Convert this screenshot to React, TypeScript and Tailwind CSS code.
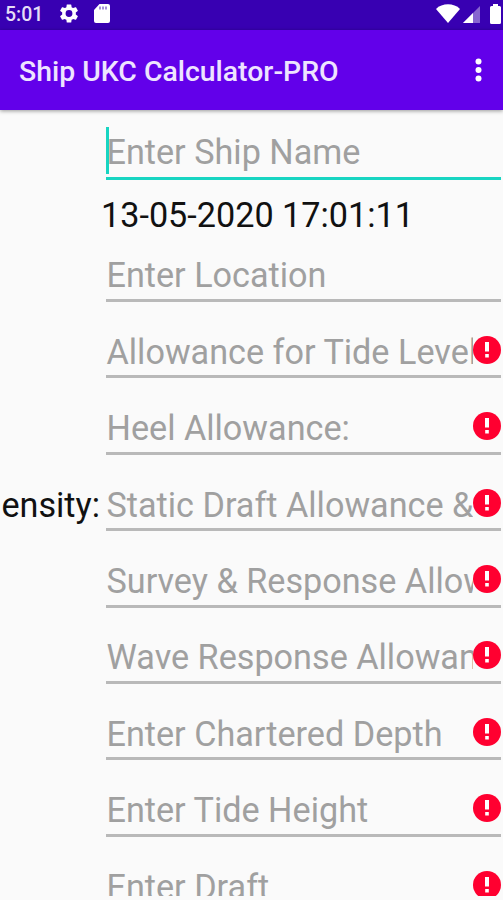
type FieldProps = {
  hint: string;
  error?: boolean;
  label?: string;
};

function ErrorIcon() {
  return (
    <svg viewBox="0 0 28 28" className="mt-[8px] h-7 w-7 shrink-0" aria-hidden="true">
      <circle cx="14" cy="14" r="14" fill="#ff0030" />
      <path d="M12 6h4v9.500h-4zM12.200 18h3.600v3.600h-3.600z" fill="#fff" />
    </svg>
  );
}

function Field({ hint, error, label }: FieldProps) {
  return (
    <div className="flex h-[76.4px] shrink-0 items-end">
      <div className="flex h-[50.5px] w-[106px] shrink-0 justify-end overflow-hidden pr-[6px] leading-[48px] whitespace-nowrap text-[#111]">
        {label}
      </div>
      <div className="flex h-[50.5px] w-[395px] border-b-[3px] border-[#b9b9b9]">
        <div className="min-w-0 flex-1 overflow-hidden pl-[0.5px] leading-[48px] whitespace-nowrap text-[#a0a0a0]">{hint}</div>
        {error && <ErrorIcon />}
      </div>
    </div>
  );
}

const fields: FieldProps[] = [
  { hint: "Allowance for Tide Level", error: true },
  { hint: "Heel Allowance:", error: true },
  { hint: "Static Draft Allowance & Density", error: true, label: "Density:" },
  { hint: "Survey & Response Allowance", error: true },
  { hint: "Wave Response Allowance", error: true },
  { hint: "Enter Chartered Depth", error: true },
  { hint: "Enter Tide Height", error: true },
  { hint: "Enter Draft", error: true },
];

export default function App() {
  return (
    <div className="flex h-[900px] w-[503px] flex-col overflow-hidden bg-[#fafafa] pb-[4px] font-['Roboto',sans-serif] text-[34.2px]">
      <div className="flex h-[30px] shrink-0 items-center bg-[#3800b2] text-[#e4dcf6]">
        <span className="ml-[5px] w-[54px] text-[19.5px] leading-[28px] font-medium">5:01</span>
        <svg viewBox="2 2 20 20" className="-mt-[3px] h-[19px] w-[20px]" fill="#fff">
          <path d="M19.14 12.94c.04-.3.06-.61.06-.94 0-.32-.02-.64-.07-.94l2.03-1.58a.49.49 0 0 0 .12-.61l-1.92-3.32a.488.488 0 0 0-.59-.22l-2.39.96c-.5-.38-1.03-.7-1.62-.94l-.36-2.54a.484.484 0 0 0-.48-.41h-3.84c-.24 0-.43.17-.47.41l-.36 2.54c-.59.24-1.13.57-1.62.94l-2.39-.96c-.22-.08-.47 0-.59.22L2.74 8.87c-.12.21-.08.47.12.61l2.03 1.58c-.05.3-.09.63-.09.94s.02.64.07.94l-2.03 1.58a.49.49 0 0 0-.12.61l1.92 3.32c.12.22.37.29.59.22l2.39-.96c.5.38 1.03.7 1.62.94l.36 2.54c.05.24.24.41.48.41h3.84c.24 0 .44-.17.47-.41l.36-2.54c.59-.24 1.13-.56 1.62-.94l2.39.96c.22.08.47 0 .59-.22l1.92-3.32c.12-.22.07-.47-.12-.61l-2.01-1.58zM12 15.6A3.6 3.6 0 1 1 12 8.4a3.6 3.6 0 0 1 0 7.2z" />
        </svg>
        <svg viewBox="0 0 16 19" className="-mt-[3px] ml-[15px] h-[19px] w-4">
          <path d="M5.5 0H14a2 2 0 0 1 2 2v15a2 2 0 0 1-2 2H2a2 2 0 0 1-2-2V6z" fill="#fff" />
          <path d="M6 2.500v3M9 2.500v3M12 2.500v3" stroke="#8f70d2" strokeWidth="1.6" />
        </svg>
        <svg viewBox="0 0 24 19" className="-mt-[3px] ml-auto h-[19px] w-6">
          <path d="M0 5C6-1.2 18-1.2 24 5L12 19z" fill="#fff" />
        </svg>
        <svg viewBox="0 0 17 17" className="-mt-[1px] ml-[3px] h-[17px] w-[17px]">
          <path d="M17 0v17H0z" fill="#8765d0" />
          <path d="M10 7v10H0z" fill="#fff" />
        </svg>
        <svg viewBox="0 0 11 20" className="mr-[2px] -mt-[3px] ml-[10px] h-5 w-[11px]">
          <path d="M3 0h5v2h1.500A1.500 1.500 0 0 1 11 3.500v15a1.500 1.500 0 0 1-1.500 1.500h-8A1.500 1.500 0 0 1 0 18.500v-15A1.500 1.500 0 0 1 1.500 2H3z" fill="#fff" />
        </svg>
      </div>
      <header className="z-10 flex h-[80px] shrink-0 items-center justify-between bg-[#6200ea] pr-[21px] pl-[19px] shadow-[0_1px_4px_rgba(0,0,0,0.4)]">
        <h1 className="mt-[4px] text-[28.4px] leading-[40px] font-medium whitespace-nowrap text-[#eee4ff]">Ship UKC Calculator-PRO</h1>
        <svg viewBox="0 0 7 24" className="h-6 w-[7px]" fill="#fff">
          <circle cx="3.5" cy="3.5" r="3" />
          <circle cx="3.5" cy="12" r="3" />
          <circle cx="3.5" cy="20.5" r="3" />
        </svg>
      </header>
      <main className="flex min-h-0 flex-1 flex-col overflow-hidden pt-[17px]">
        <div className="ml-[106px] flex h-[53px] w-[395px] shrink-0 border-b-[3px] border-[#18d5c2]">
          <div className="h-[47px] w-[3px] shrink-0 bg-[#18d5c2]" />
          <div className="-ml-[2.5px] leading-[51px] whitespace-nowrap text-[#a0a0a0]">Enter Ship Name</div>
        </div>
        <div className="ml-[101px] h-[45.6px] shrink-0 leading-[70px] whitespace-nowrap text-[#111]">13-05-2020 17:01:11</div>
        <Field hint="Enter Location" />
        {fields.map((field) => (
          <Field key={field.hint} {...field} />
        ))}
      </main>
    </div>
  );
}
